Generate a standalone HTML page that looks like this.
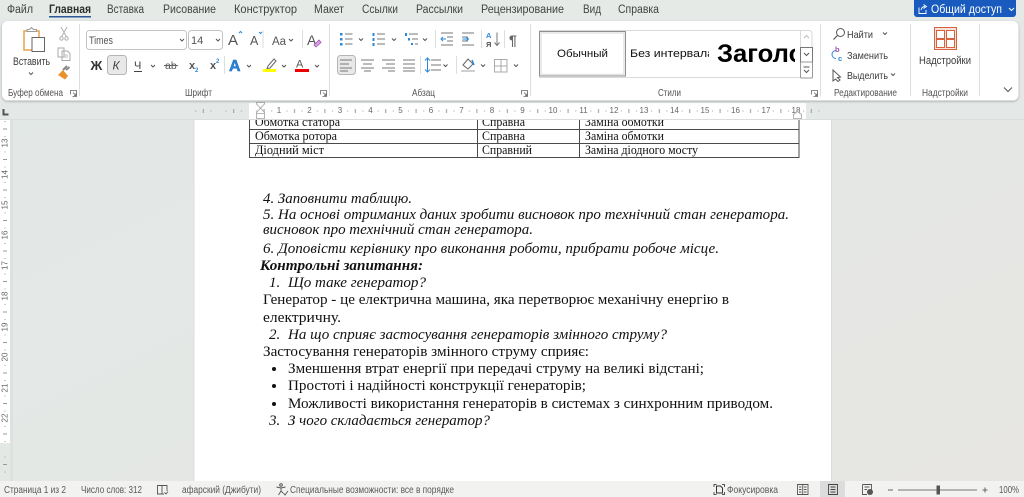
<!DOCTYPE html>
<html lang="uk"><head><meta charset="utf-8"><title>Word</title>
<style>
html,body{margin:0;padding:0;width:1024px;height:497px;overflow:hidden;background:#e5e8e5}
svg{display:block;filter:blur(.3px)}
text{font-family:"Liberation Sans",sans-serif;fill:#3b3b3b;font-size:10.5px}
.t{font-size:11.5px;fill:#424242}
.g{font-size:10px;fill:#555}
.s{font-size:10px;fill:#5a5a5a}
.d{font-family:"Liberation Serif",serif;font-size:15px;fill:#111}
.i{font-style:italic}
.c{font-family:"Liberation Serif",serif;font-size:13px;fill:#111}
.r{font-size:8px;fill:#666;text-anchor:middle}
.ch{stroke:#555;stroke-width:1;fill:none}
</style></head><body>
<svg width="1024" height="497" viewBox="0 0 1024 497" xmlns="http://www.w3.org/2000/svg">
<defs>
<linearGradient id="bg" x1="0" y1="0" x2="1" y2="1"><stop offset="0" stop-color="#e2e9e8"/><stop offset="1" stop-color="#e7e6e2"/></linearGradient>
<pattern id="hr" x="248.9" y="0" width="30.4" height="20" patternUnits="userSpaceOnUse">
<rect x="7.1" y="10.500" width="1" height="1" fill="#999"/><rect x="14.7" y="9" width="1" height="4" fill="#999"/><rect x="22.3" y="10.500" width="1" height="1" fill="#999"/></pattern>
<pattern id="vr" x="0" y="113.500" width="20" height="30.500" patternUnits="userSpaceOnUse">
<rect x="4.500" y="7.500" width="1" height="1" fill="#999"/><rect x="3" y="15" width="4" height="1" fill="#999"/><rect x="4.500" y="22.500" width="1" height="1" fill="#999"/></pattern>
<clipPath id="st2"><rect x="628" y="31" width="81" height="46"/></clipPath>
<clipPath id="st3"><rect x="712" y="31" width="83" height="46"/></clipPath>
<clipPath id="pg"><rect x="194" y="119" width="637" height="362"/></clipPath>
<filter id="sh" x="-2%" y="-10%" width="104%" height="125%"><feDropShadow dx="0" dy="1" stdDeviation="1.2" flood-color="#000" flood-opacity=".28"/></filter>
</defs>
<rect width="1024" height="497" fill="url(#bg)"/>

<!-- document page -->
<rect x="194" y="100" width="637" height="381" fill="#fff"/>
<rect x="193.500" y="119" width="1" height="362" fill="#dcdcda"/><rect x="831" y="119" width="1" height="362" fill="#dcdcda"/>
<g clip-path="url(#pg)">
<path d="M249.500 110V157.500H799V110M249.500 129.500H799M249.500 143.500H799M477.500 110V157.500M579.500 110V157.500" stroke="#4a4a4a" stroke-width="1" fill="none"/>
<text class="c" x="255" y="126" textLength="85" lengthAdjust="spacingAndGlyphs">Обмотка статора</text>
<text class="c" x="482" y="126" textLength="43" lengthAdjust="spacingAndGlyphs">Справна</text>
<text class="c" x="585" y="126" textLength="79" lengthAdjust="spacingAndGlyphs">Заміна обмотки</text>
<text class="c" x="255" y="140" textLength="82" lengthAdjust="spacingAndGlyphs">Обмотка ротора</text>
<text class="c" x="482" y="140" textLength="43" lengthAdjust="spacingAndGlyphs">Справна</text>
<text class="c" x="585" y="140" textLength="79" lengthAdjust="spacingAndGlyphs">Заміна обмотки</text>
<text class="c" x="255" y="154" textLength="69" lengthAdjust="spacingAndGlyphs">Діодний міст</text>
<text class="c" x="482" y="154" textLength="50" lengthAdjust="spacingAndGlyphs">Справний</text>
<text class="c" x="585" y="154" textLength="113" lengthAdjust="spacingAndGlyphs">Заміна діодного мосту</text>

<text class="d i" x="263" y="203" textLength="149" lengthAdjust="spacingAndGlyphs">4. Заповнити таблицю.</text>
<text class="d i" x="263" y="219" textLength="526" lengthAdjust="spacingAndGlyphs">5. На основі отриманих даних зробити висновок про технічний стан генератора.</text>
<text class="d i" x="263" y="234" textLength="270" lengthAdjust="spacingAndGlyphs">висновок про технічний стан генератора.</text>
<text class="d i" x="263" y="253" textLength="456" lengthAdjust="spacingAndGlyphs">6. Доповісти керівнику про виконання роботи, прибрати робоче місце.</text>
<text class="d i" style="font-weight:bold" x="260" y="270" textLength="163" lengthAdjust="spacingAndGlyphs">Контрольні запитання:</text>
<text class="d i" x="269" y="287">1.</text>
<text class="d i" x="288" y="287" textLength="138" lengthAdjust="spacingAndGlyphs">Що таке генератор?</text>
<text class="d" x="263" y="304" textLength="466" lengthAdjust="spacingAndGlyphs">Генератор - це електрична машина, яка перетворює механічну енергію в</text>
<text class="d" x="263" y="322" textLength="78" lengthAdjust="spacingAndGlyphs">електричну.</text>
<text class="d i" x="269" y="339">2.</text>
<text class="d i" x="288" y="339" textLength="379" lengthAdjust="spacingAndGlyphs">На що сприяє застосування генераторів змінного струму?</text>
<text class="d" x="263" y="356" textLength="326" lengthAdjust="spacingAndGlyphs">Застосування генераторів змінного струму сприяє:</text>
<circle cx="274" cy="369" r="2" fill="#111"/>
<text class="d" x="288" y="373" textLength="416" lengthAdjust="spacingAndGlyphs">Зменшення втрат енергії при передачі струму на великі відстані;</text>
<circle cx="274" cy="386" r="2" fill="#111"/>
<text class="d" x="288" y="390" textLength="298" lengthAdjust="spacingAndGlyphs">Простоті і надійності конструкції генераторів;</text>
<circle cx="274" cy="404" r="2" fill="#111"/>
<text class="d" x="288" y="408" textLength="485" lengthAdjust="spacingAndGlyphs">Можливості використання генераторів в системах з синхронним приводом.</text>
<text class="d i" x="269" y="425">3.</text>
<text class="d i" x="288" y="425" textLength="202" lengthAdjust="spacingAndGlyphs">З чого складається генератор?</text>
</g>

<!-- ruler -->
<rect x="0" y="100" width="1024" height="19" fill="#e4e9e7"/>
<rect x="0" y="119" width="1024" height="1" fill="#d9dedb"/>
<rect x="249" y="103" width="557" height="16" fill="#fff"/>
<rect x="195" y="100" width="636" height="19" fill="url(#hr)"/>
<g>
<text class="r" x="279" y="113">1</text><text class="r" x="309.500" y="113">2</text><text class="r" x="340" y="113">3</text><text class="r" x="370.500" y="113">4</text><text class="r" x="400.500" y="113">5</text><text class="r" x="431" y="113">6</text><text class="r" x="461.500" y="113">7</text><text class="r" x="492" y="113">8</text><text class="r" x="522.500" y="113">9</text><text class="r" x="553" y="113">10</text><text class="r" x="583.500" y="113">11</text><text class="r" x="614" y="113">12</text><text class="r" x="644" y="113">13</text><text class="r" x="674.500" y="113">14</text><text class="r" x="705" y="113">15</text><text class="r" x="735.500" y="113">16</text><text class="r" x="766" y="113">17</text><text class="r" x="796" y="113">18</text>
</g>
<path d="M256.500 102.500H264.500V104L260.500 108L264.500 112.500V113.500H256.500V112.500L260.500 108L256.500 104ZM256.500 113.500H264.500V118.500H256.500Z" fill="#fff" stroke="#a0a0a0" stroke-width=".8"/>
<path d="M793.500 118.500V114.500L797.500 111.500L801.500 114.500V118.500Z" fill="#fff" stroke="#a0a0a0" stroke-width=".8"/>
<path d="M3.500 109V114.500H8.500" stroke="#555" stroke-width="2" fill="none"/>

<!-- vertical ruler -->
<rect x="0" y="120" width="10" height="323" fill="#fff"/>
<rect x="10" y="120" width="3" height="361" fill="#dde2df"/>
<rect x="0" y="120" width="10" height="361" fill="url(#vr)"/>
<g>
<text class="r" transform="translate(7.500,143) rotate(-90)">13</text><text class="r" transform="translate(7.500,174.500) rotate(-90)">14</text><text class="r" transform="translate(7.500,205) rotate(-90)">15</text><text class="r" transform="translate(7.500,235) rotate(-90)">16</text><text class="r" transform="translate(7.500,265.500) rotate(-90)">17</text><text class="r" transform="translate(7.500,296) rotate(-90)">18</text><text class="r" transform="translate(7.500,327) rotate(-90)">19</text><text class="r" transform="translate(7.500,357) rotate(-90)">20</text><text class="r" transform="translate(7.500,388) rotate(-90)">21</text><text class="r" transform="translate(7.500,418) rotate(-90)">22</text>
</g>

<!-- tabs -->
<rect x="0" y="0" width="1024" height="21" fill="#e5eae7"/>
<text class="t" x="7" y="13" textLength="26" lengthAdjust="spacingAndGlyphs">Файл</text>
<text class="t" style="font-weight:bold;fill:#2c2c2c" x="49" y="13" textLength="42" lengthAdjust="spacingAndGlyphs">Главная</text>
<rect x="49" y="16" width="42" height="1.500" fill="#2b5797"/>
<text class="t" x="107" y="13" textLength="37" lengthAdjust="spacingAndGlyphs">Вставка</text>
<text class="t" x="163" y="13" textLength="53" lengthAdjust="spacingAndGlyphs">Рисование</text>
<text class="t" x="234" y="13" textLength="63" lengthAdjust="spacingAndGlyphs">Конструктор</text>
<text class="t" x="314" y="13" textLength="30" lengthAdjust="spacingAndGlyphs">Макет</text>
<text class="t" x="362" y="13" textLength="36" lengthAdjust="spacingAndGlyphs">Ссылки</text>
<text class="t" x="416" y="13" textLength="47" lengthAdjust="spacingAndGlyphs">Рассылки</text>
<text class="t" x="481" y="13" textLength="83" lengthAdjust="spacingAndGlyphs">Рецензирование</text>
<text class="t" x="583" y="13" textLength="18" lengthAdjust="spacingAndGlyphs">Вид</text>
<text class="t" x="618" y="13" textLength="41" lengthAdjust="spacingAndGlyphs">Справка</text>
<path d="M914 0H1016V14a3 3 0 0 1-3 3H917a3 3 0 0 1-3-3Z" fill="#185abd"/>
<path d="M919 7.500V13.500H926V10M921 10c.5-2.500 2-3.500 4-3.500M923.500 4.500L926.500 6.500L923.500 8.500" stroke="#fff" fill="none" stroke-width=".9"/>
<text class="t" style="fill:#fff" x="931" y="13" textLength="71" lengthAdjust="spacingAndGlyphs">Общий доступ</text>
<path d="M1009 8l2.500 2.500L1014 8" stroke="#fff" fill="none"/>

<!-- ribbon -->
<rect x="2" y="21" width="1016.500" height="79.500" rx="6" fill="#fff" filter="url(#sh)"/>
<g fill="#dedede"><rect x="79" y="24" width="1" height="72"/><rect x="329" y="24" width="1" height="72"/><rect x="530" y="24" width="1" height="72"/><rect x="820" y="24" width="1" height="72"/><rect x="910" y="24" width="1" height="72"/><rect x="979" y="24" width="1" height="72"/></g>

<!-- clipboard -->
<rect x="24" y="31" width="15" height="19" fill="#fff" stroke="#e6a24c" stroke-width="1.500"/>
<path d="M27 31.500V29.500H29.500L31.500 27.500L33.500 29.500H36.500V31.500Z" fill="#fff" stroke="#9a9a9a"/>
<rect x="32" y="37.500" width="12.500" height="14" fill="#fff" stroke="#666" stroke-width="1"/>
<text x="13" y="65" style="font-size:11px" textLength="37" lengthAdjust="spacingAndGlyphs">Вставить</text>
<path class="ch" d="M29 72.500l2 2 2-2"/>
<path d="M61 27L66.500 37M67 27L61.500 37" stroke="#b0b0b0" fill="none"/><circle cx="61.500" cy="38.500" r="1.700" fill="none" stroke="#b0b0b0"/><circle cx="66.500" cy="38.500" r="1.700" fill="none" stroke="#b0b0b0"/>
<path d="M58 48H64V57H58ZM62 51H67.500L70 53.500V60.500H62Z" fill="#fff" stroke="#aaa"/><path d="M64 55H68M64 57H68" stroke="#bbb"/>
<path d="M58 75L63 70L68 76L65 79.500Z" fill="#e8912d"/><path d="M63 70L67 66M66 70L69.500 67" stroke="#888" stroke-width="2"/>
<text class="g" x="8" y="96" textLength="55" lengthAdjust="spacingAndGlyphs">Буфер обмена</text>
<g stroke="#666" stroke-width=".8" fill="none"><path d="M70.500 94.500V90.500H76.500V96.500H72.500M73 92.500L76 95.500M76 93.500V95.500H74"/><path d="M320.500 94.500V90.500H326.500V96.500H322.500M323 92.500L326 95.500M326 93.500V95.500H324"/><path d="M521.500 94.500V90.500H527.500V96.500H523.500M524 92.500L527 95.500M527 93.500V95.500H525"/><path d="M811.500 94.500V90.500H817.500V96.500H813.500M814 92.500L817 95.500M817 93.500V95.500H815"/></g>

<!-- font -->
<rect x="86.500" y="30.500" width="100" height="19" rx="3" fill="#fff" stroke="#c4c4c4"/>
<rect x="188.500" y="30.500" width="34" height="19" rx="3" fill="#fff" stroke="#c4c4c4"/>
<text x="89" y="44" style="font-size:11px;fill:#555" textLength="24" lengthAdjust="spacingAndGlyphs">Times</text>
<text x="191" y="44" style="font-size:11px;fill:#555">14</text>
<path class="ch" d="M180 39l2 2 2-2M216 39l2 2 2-2"/>
<text x="228" y="45" style="font-size:15px;fill:#555">A</text><path d="M239 33l1.500-1.500 1.500 1.500" stroke="#2b88d8" fill="none"/>
<text x="250" y="45" style="font-size:12.500px;fill:#555">A</text><path d="M259 32l1.500 1.500 1.500-1.500" stroke="#2b88d8" fill="none"/>
<text x="272" y="45" style="font-size:11.500px;fill:#555">Aa</text>
<path class="ch" d="M289 39l2 2 2-2"/>
<rect x="302" y="30" width="1" height="18" fill="#dedede"/><rect x="262.500" y="30" width="1" height="18" fill="#dedede"/>
<text x="307" y="45" style="font-size:14px;fill:#555">A</text><path d="M314 45L319 40L321 42.500L316 47Z" fill="#d9a3e0" stroke="#a14fb5" stroke-width=".8"/>
<text x="90.500" y="70" style="font-size:13px;font-weight:bold;fill:#333">Ж</text>
<rect x="107.500" y="55.500" width="19" height="19" rx="3" fill="#e8e8e8" stroke="#b5b5b5"/>
<text x="112.500" y="69.500" style="font-size:12px;font-style:italic;fill:#444">К</text>
<text x="134" y="69" style="font-size:11px;fill:#444">Ч</text><rect x="134" y="71" width="8" height="1" fill="#444"/>
<path class="ch" d="M151 65l2 2 2-2M247 65l2 2 2-2M282 65l2 2 2-2M315 65l2 2 2-2"/>
<text x="165" y="69" style="font-size:10.500px;fill:#555">ab</text><rect x="164" y="65" width="14" height="1" fill="#666"/>
<text x="189" y="69" style="font-size:11px;font-weight:bold;fill:#555">x</text><text x="195" y="72" style="font-size:6px;fill:#2b88d8;font-weight:bold">2</text>
<text x="210" y="69" style="font-size:11px;font-weight:bold;fill:#555">x</text><text x="216" y="63" style="font-size:6px;fill:#2b88d8;font-weight:bold">2</text>
<rect x="224" y="56" width="1" height="18" fill="#dedede"/>
<text x="229" y="71" style="font-size:16px;font-weight:bold;fill:#2b88d8;stroke:#1767b3;stroke-width:.5">A</text>
<path d="M268 66L274 59L276 61L270 68L267 68.500Z" fill="#fff" stroke="#666"/><rect x="263" y="69" width="13" height="3" fill="#ffff00"/>
<text x="296" y="67.500" style="font-size:11px;fill:#555">A</text><rect x="295" y="69" width="14" height="3" fill="#ee0000"/>

<text class="g" x="185" y="96" textLength="27" lengthAdjust="spacingAndGlyphs">Шрифт</text>

<!-- paragraph row1 -->
<g fill="#2b88d8">
<rect x="340" y="33" width="2.500" height="2.500"/><rect x="340" y="38" width="2.500" height="2.500"/><rect x="340" y="43" width="2.500" height="2.500"/>
<rect x="372.500" y="33" width="2" height="3"/><rect x="372.500" y="38" width="2" height="3"/><rect x="372.500" y="43" width="2" height="3"/>
<rect x="405" y="33" width="2" height="3"/><rect x="408" y="38" width="2" height="2.500"/><rect x="411" y="43" width="2" height="2"/>
</g>
<g stroke="#777" stroke-width="1" fill="none">
<path d="M345 34H352.500M345 39H352.500M345 44H352.500M377 34H385M377 39H385M377 44H385M409 34H418M412 39H418M415 44H418"/>
<path d="M441 33H453M447 37H453M447 41H453M441 45H453M462 33H474M462 37H468M462 41H468M462 45H474"/>
<path d="M497 32.500V45M494.500 42.500L497 45.500L499.500 42.500"/>
</g>
<path class="ch" d="M359 38.500l2 2 2-2M392 38.500l2 2 2-2M423 38.500l2 2 2-2"/>
<path d="M446 39H441M443 37L441 39L443 41M462.500 39H468M466 37L468.500 39L466 41" stroke="#2b88d8" fill="none"/>
<text x="486" y="38" style="font-size:7.500px;font-weight:bold;fill:#2b88d8">A</text><text x="486" y="47" style="font-size:7.500px;font-weight:bold;fill:#555">Я</text>
<rect x="435" y="30" width="1" height="18" fill="#dedede"/><rect x="481" y="30" width="1" height="18" fill="#dedede"/><rect x="504" y="30" width="1" height="18" fill="#dedede"/>
<text x="509" y="45" style="font-size:14px;font-weight:bold;fill:#666">¶</text>

<!-- paragraph row2 -->
<rect x="337.500" y="55.500" width="18" height="19" rx="3" fill="#e8e8e8" stroke="#b5b5b5"/>
<g stroke="#777" stroke-width="1" fill="none">
<path d="M340 60H352M340 64H349M340 68H352M340 71H348"/>
<path d="M361 60H374M363 64H372M361 68H374M364 71H371"/>
<path d="M382 60H395M386 64H395M382 68H395M388 71H395"/>
<path d="M403 60H415M403 64H415M403 68H415M403 71H415"/>
<path d="M431 60H441M431 65H441M431 70H441"/>
<path d="M494.500 59.500H507V72H494.500ZM501 59.500V72M494.500 66H507" stroke="#aaa"/>
</g>
<path d="M427.500 58V72M425 60.500L427.500 58L430 60.500M425 69.500L427.500 72L430 69.500" stroke="#2b88d8" fill="none"/>
<path class="ch" d="M443.500 64.500l2 2 2-2M481 64.500l2 2 2-2M514 64.500l2 2 2-2"/>
<rect x="420" y="56" width="1" height="18" fill="#dedede"/><rect x="456" y="56" width="1" height="18" fill="#dedede"/>
<path d="M463 65L468 59L473 64L468 69Z" fill="#fff" stroke="#666"/><path d="M472 60L474 65" stroke="#2b88d8" stroke-width="1.500"/><rect x="461" y="70" width="14" height="2" fill="#d0d0d0"/>
<text class="g" x="412" y="96" textLength="23" lengthAdjust="spacingAndGlyphs">Абзац</text>

<!-- styles -->
<path d="M539 30.500H800M539 77.500H800" stroke="#dadada" fill="none"/>
<rect x="539.500" y="31.500" width="86" height="44.500" fill="#fff" stroke="#8f8f8f"/>
<rect x="541" y="33" width="83" height="41.500" fill="#fff" stroke="#e3e3e3" stroke-width="1.500"/>
<text x="557" y="57" style="font-size:11px;fill:#111" textLength="51" lengthAdjust="spacingAndGlyphs">Обычный</text>
<g clip-path="url(#st2)"><text x="630" y="57" style="font-size:11px;fill:#111" textLength="84" lengthAdjust="spacingAndGlyphs">Без интервала</text></g>
<g clip-path="url(#st3)"><text x="717" y="62" style="font-size:25px;font-weight:bold;fill:#000" textLength="103" lengthAdjust="spacingAndGlyphs">Заголов</text></g>
<path d="M800.500 30.500H809a3 3 0 0 1 3 3V75a3 3 0 0 1-3 3H800.500Z" fill="#fff" stroke="#dadada"/>
<rect x="800.500" y="47.500" width="12" height="14.500" fill="#fff" stroke="#777"/>
<rect x="800.500" y="62" width="12" height="16" rx="1" fill="#fff" stroke="#999"/>
<path d="M804 38l2.500-2.500L809 38" stroke="#bbb" fill="none"/>
<path d="M804 53l2.500 2.500L809 53M803.500 67H809.500M804 70l2.500 2.500L809 70" stroke="#555" fill="none"/>
<text class="g" x="658" y="96" textLength="23" lengthAdjust="spacingAndGlyphs">Стили</text>

<!-- editing -->
<circle cx="840.500" cy="32.500" r="4" fill="none" stroke="#555"/><path d="M837.500 35.500L833.500 39.500" stroke="#555" stroke-width="1.200"/>
<text x="847" y="38" style="font-size:10.500px" textLength="26" lengthAdjust="spacingAndGlyphs">Найти</text><path class="ch" d="M883 32.500l2 2 2-2"/>
<path d="M836 50.500a4 4 0 0 0 0 8" fill="none" stroke="#2b88d8"/><text x="835" y="52" style="font-size:7.500px;fill:#a14fb5;font-weight:bold">b</text><text x="838" y="61" style="font-size:7.500px;fill:#2b88d8;font-weight:bold">c</text>
<text x="847" y="59" style="font-size:10.500px" textLength="41" lengthAdjust="spacingAndGlyphs">Заменить</text>
<path d="M833 70V81L835.500 79L838 81.500L840 80L837.500 77.500L840.500 77Z" fill="#fff" stroke="#555"/>
<text x="847" y="79" style="font-size:10.500px" textLength="41" lengthAdjust="spacingAndGlyphs">Выделить</text><path class="ch" d="M891 73.500l2 2 2-2"/>
<text class="g" x="834" y="96" textLength="63" lengthAdjust="spacingAndGlyphs">Редактирование</text>

<!-- add-ins -->
<rect x="934.500" y="27.500" width="22" height="22" fill="#f6e3dc" stroke="#d8623c"/>
<rect x="936.500" y="30.500" width="8" height="8" fill="#fff" stroke="#d8623c"/><rect x="946.500" y="30.500" width="8" height="8" fill="#fff" stroke="#d8623c"/><rect x="936.500" y="39.500" width="8" height="8" fill="#fff" stroke="#d8623c"/><rect x="946.500" y="39.500" width="8" height="8" fill="#fff" stroke="#d8623c"/>
<text x="919" y="64" style="font-size:11px" textLength="52" lengthAdjust="spacingAndGlyphs">Надстройки</text>
<text class="g" x="922" y="96" textLength="46" lengthAdjust="spacingAndGlyphs">Надстройки</text>
<path d="M1004 87.500l4 4 4-4" stroke="#555" fill="none"/>

<!-- status bar -->
<rect x="0" y="481" width="1024" height="16" fill="#f2f2f1"/>
<g>
<text class="s" x="4" y="493" textLength="62" lengthAdjust="spacingAndGlyphs">Страница 1 из 2</text>
<text class="s" x="81" y="493" textLength="61" lengthAdjust="spacingAndGlyphs">Число слов: 312</text>
<path d="M157.500 485.500H162V494H157.500ZM162 485.500H167V491M162 494H164M164.500 492.500L166 494L168 491.500" stroke="#555" fill="none" stroke-width=".9"/>
<text class="s" x="182" y="493" textLength="79" lengthAdjust="spacingAndGlyphs">афарский (Джибути)</text>
<circle cx="281" cy="485" r="1.300" fill="none" stroke="#555"/><path d="M276.500 487L281 488L285.500 487M281 488V491L278.500 495M281 491L283 493M283.500 493L285 495L288 491" stroke="#555" fill="none" stroke-width=".9"/>
<text class="s" x="290" y="493" textLength="164" lengthAdjust="spacingAndGlyphs">Специальные возможности: все в порядке</text>
<path d="M714 487V484.500H716.500M722 484.500H724.500V487M714 492V494.500H716.500M722 494.500H724.500V492" stroke="#555" fill="none"/><path d="M716.500 486H720.500L722.500 488V493H716.500Z" fill="none" stroke="#333"/>
<text class="s" x="727" y="493" textLength="51" lengthAdjust="spacingAndGlyphs">Фокусировка</text>
<path d="M797.500 484.500H808V494.500H797.500ZM802.750 484.500V494.500M799 487H801.500M799 489.500H801.500M799 492H801.500M804 487H806.500M804 489.500H806.500M804 492H806.500" stroke="#555" fill="none" stroke-width=".9"/>
<rect x="820" y="481" width="25" height="16" fill="#dcdcdc"/>
<path d="M828.500 484.500H837.500V494.500H828.500ZM830.500 487H835.500M830.500 489.500H835.500M830.500 492H835.500" stroke="#444" fill="none" stroke-width=".9"/>
<path d="M862.500 484.500H871.500V490M862.500 484.500V494.500H867M864.500 487H869.500M864.500 489.500H867" stroke="#555" fill="none" stroke-width=".9"/><circle cx="870" cy="492" r="3" fill="#555"/>
<rect x="888" y="489.500" width="5" height="1" fill="#666"/>
<rect x="898" y="489.500" width="79" height="1" fill="#777"/>
<rect x="936.500" y="485.500" width="3.500" height="9" fill="#555"/>
<path d="M982.500 490H987.500M985 487.500V492.500" stroke="#666" fill="none"/>
<text class="s" x="999" y="493" textLength="20" lengthAdjust="spacingAndGlyphs">100%</text>
</g>
</svg>
</body></html>
